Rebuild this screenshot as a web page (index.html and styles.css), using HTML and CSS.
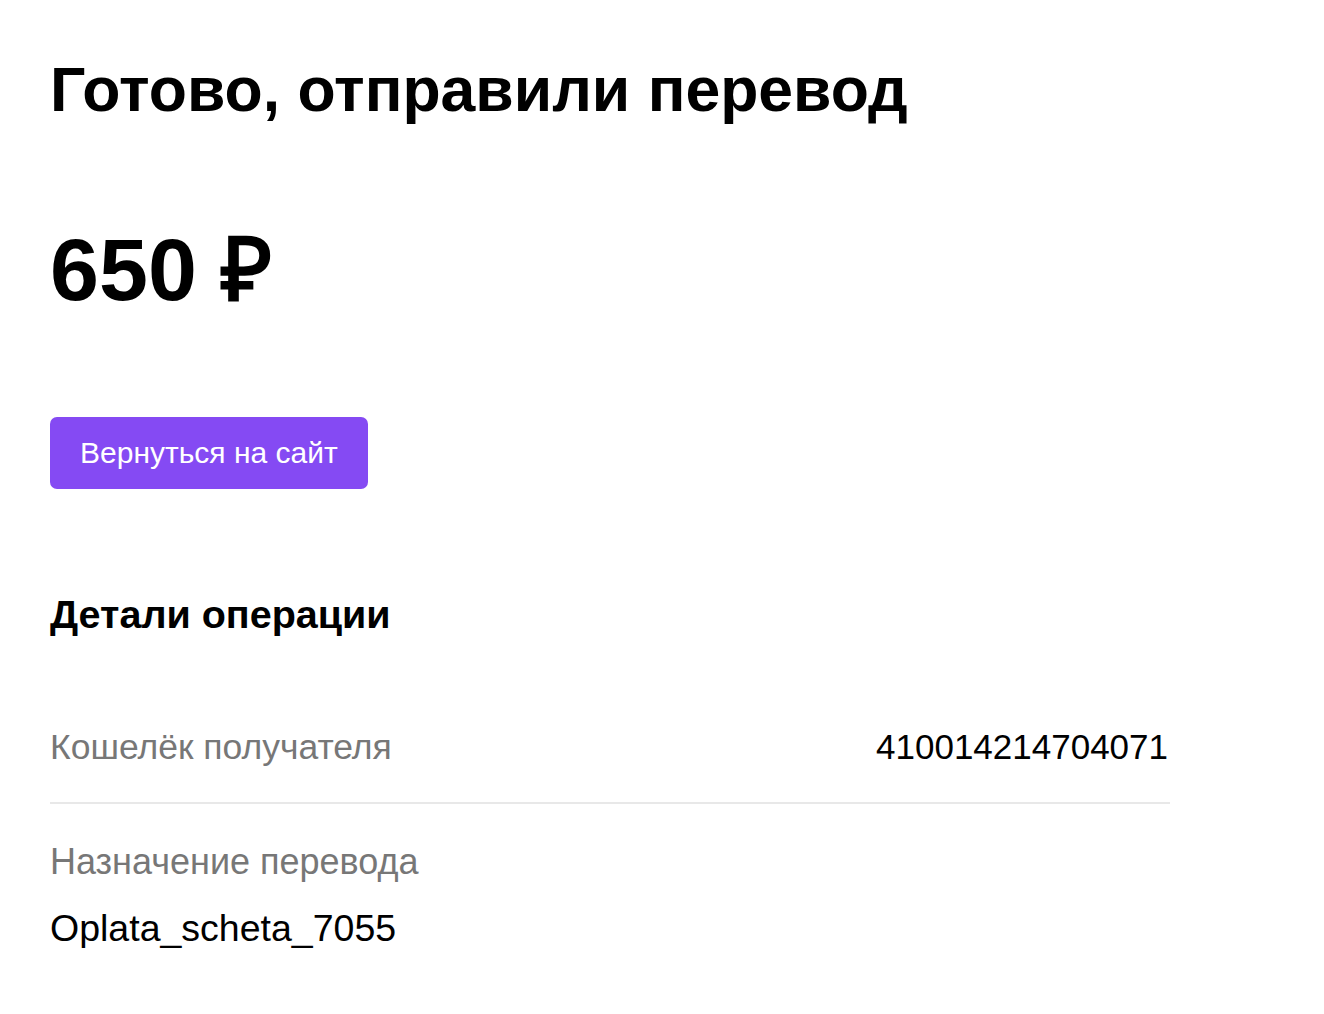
FILE: index.html
```html
<!DOCTYPE html>
<html lang="ru">
<head>
<meta charset="utf-8">
<link rel="stylesheet" href="styles.css">
</head>
<body>
<main class="page">
  <h1 class="title">Готово, отправили перевод</h1>
  <div class="amount">650 ₽</div>
  <a class="btn" href="#">Вернуться на сайт</a>
  <h2 class="section">Детали операции</h2>
  <div class="row row-inline">
    <span class="label">Кошелёк получателя</span>
    <span class="value">410014214704071</span>
  </div>
  <div class="row row-stack">
    <span class="label">Назначение перевода</span>
    <span class="value">Oplata_scheta_7055</span>
  </div>
</main>
</body>
</html>
```
FILE: styles.css
```css
* { box-sizing: border-box; }
html, body { margin: 0; padding: 0; background: #fff; }
body { font-family: "Liberation Sans", Arial, sans-serif; color: #000; }
.page { width: 1120px; margin-left: 50px; padding-top: 49px; display: flex; flex-direction: column; align-items: flex-start; }
.title { margin: 0; font-size: 62.5px; line-height: 80px; font-weight: 700; }
.amount { margin-top: 91px; font-size: 88px; line-height: 100px; font-weight: 700; }
.btn { margin-top: 97px; height: 72px; padding: 0 30px; display: flex; align-items: center; background: #854af3; color: #fff; border-radius: 7px; font-size: 30px; text-decoration: none; }
.section { margin: 102px 0 0; font-size: 39.5px; line-height: 46px; font-weight: 700; }
.row { align-self: stretch; }
.row-inline { margin-top: 90px; display: flex; justify-content: space-between; align-items: baseline; padding-bottom: 35px; border-bottom: 2px solid #e8e8e8; }
.row-inline .value { margin-right: 2px; font-size: 35px; }
.row-stack { margin-top: 38px; display: flex; flex-direction: column; gap: 26px; }
.label { font-size: 35.5px; line-height: 40px; color: #777; }
.row-stack .label { font-size: 36px; }
.value { font-size: 37.5px; line-height: 40px; color: #000; }
```
